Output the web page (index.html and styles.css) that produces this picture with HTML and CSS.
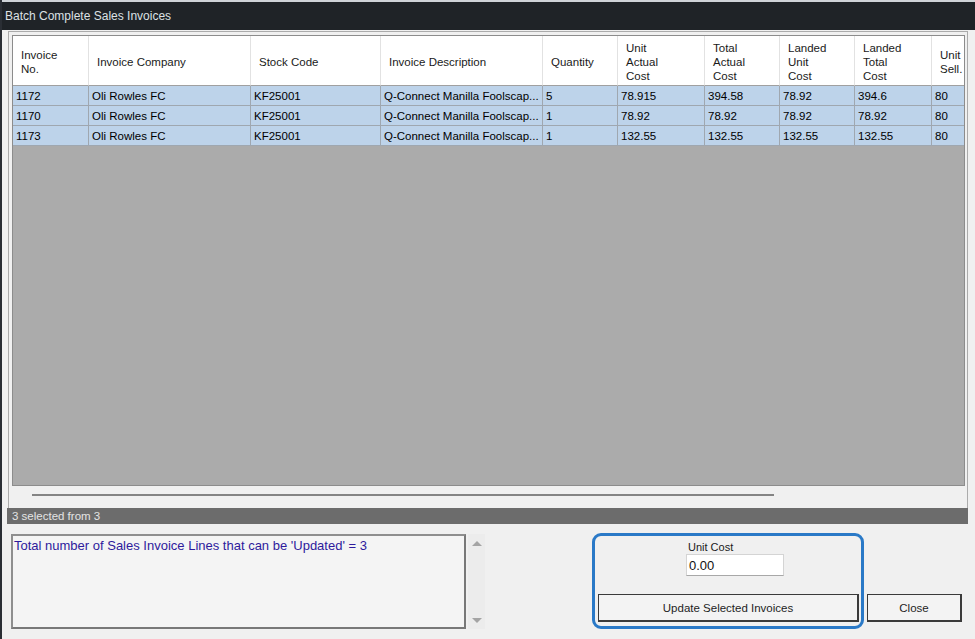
FILE: index.html
```html
<!DOCTYPE html>
<html>
<head>
<meta charset="utf-8">
<link rel="stylesheet" href="styles.css">
</head>
<body>
<div class="window">
  <div class="topstrip"></div>
  <div class="titlebar">Batch Complete Sales Invoices</div>
  <div class="content">
    <div class="gridpanel">
      <div class="grid">
        <div class="table">
          <div class="hcell">Invoice<br>No.</div>
          <div class="hcell">Invoice Company</div>
          <div class="hcell">Stock Code</div>
          <div class="hcell">Invoice Description</div>
          <div class="hcell">Quantity</div>
          <div class="hcell">Unit<br>Actual<br>Cost</div>
          <div class="hcell">Total<br>Actual<br>Cost</div>
          <div class="hcell">Landed<br>Unit<br>Cost</div>
          <div class="hcell">Landed<br>Total<br>Cost</div>
          <div class="hcell last">Unit<br>Sell.</div>

          <div class="cell">1172</div>
          <div class="cell">Oli Rowles FC</div>
          <div class="cell">KF25001</div>
          <div class="cell">Q-Connect Manilla Foolscap...</div>
          <div class="cell">5</div>
          <div class="cell">78.915</div>
          <div class="cell">394.58</div>
          <div class="cell">78.92</div>
          <div class="cell">394.6</div>
          <div class="cell last">80</div>

          <div class="cell">1170</div>
          <div class="cell">Oli Rowles FC</div>
          <div class="cell">KF25001</div>
          <div class="cell">Q-Connect Manilla Foolscap...</div>
          <div class="cell">1</div>
          <div class="cell">78.92</div>
          <div class="cell">78.92</div>
          <div class="cell">78.92</div>
          <div class="cell">78.92</div>
          <div class="cell last">80</div>

          <div class="cell">1173</div>
          <div class="cell">Oli Rowles FC</div>
          <div class="cell">KF25001</div>
          <div class="cell">Q-Connect Manilla Foolscap...</div>
          <div class="cell">1</div>
          <div class="cell">132.55</div>
          <div class="cell">132.55</div>
          <div class="cell">132.55</div>
          <div class="cell">132.55</div>
          <div class="cell last">80</div>
        </div>
      </div>
      <div class="hscroll"><div class="hthumb"></div></div>
    </div>
    <div class="status">3 selected from 3</div>
    <div class="bottom">
      <div class="msgbox">Total number of Sales Invoice Lines that can be 'Updated' = 3</div>
      <div class="vscroll">
        <div class="arrow up"></div>
        <div class="arrow down"></div>
      </div>
      <div class="group">
        <div class="grouplabel">Unit Cost</div>
        <div class="costinput">0.00</div>
        <div class="btn update">Update Selected Invoices</div>
      </div>
      <div class="btn close">Close</div>
    </div>
  </div>
</div>
</body>
</html>
```

FILE: styles.css
```css
* { box-sizing: border-box; }
html, body {
  margin: 0;
  padding: 0;
  width: 975px;
  height: 639px;
  overflow: hidden;
  background: #f0f0f0;
  font-family: "Liberation Sans", Arial, sans-serif;
  color: #111;
}
.window {
  width: 975px;
  height: 639px;
  border-left: 2px solid #2a2e34;
  background: #f0f0f0;
  display: flex;
  flex-direction: column;
}
.topstrip {
  height: 2px;
  background: #cfd3d7;
}
.titlebar {
  height: 28px;
  background: #1f2327;
  color: #dde1e4;
  font-size: 12px;
  padding-left: 3px;
  display: flex;
  align-items: center;
}
.content {
  padding-top: 1px;
}
.gridpanel {
  margin-left: 6px;
  width: 960px;
  height: 477px;
  border: 1px solid #ababab;
  border-bottom: none;
  padding: 3px 0 0 3px;
  background: #f0f0f0;
}
.grid {
  width: 953px;
  height: 451px;
  border: 1px solid #8c8c8c;
  background: #ababab;
  overflow: hidden;
}
.table {
  display: grid;
  grid-template-columns: 76px 162px 130px 162px 75px 87px 75px 75px 77px 32px;
  grid-template-rows: 50px 20px 20px 20px;
  font-size: 11.5px;
}
.hcell {
  background: #ffffff;
  border-right: 1px solid #e2e2e2;
  border-bottom: 1px solid #a0a0a0;
  padding: 2px 0 0 8px;
  line-height: 14px;
  color: #1a1a1a;
  display: flex;
  align-items: center;
  overflow: hidden;
  white-space: nowrap;
}
.cell {
  background: #bdd3ea;
  border-right: 1px solid #9fa7b0;
  border-bottom: 1px solid #9fa7b0;
  padding: 1px 0 0 3px;
  display: flex;
  align-items: center;
  white-space: nowrap;
  overflow: hidden;
  color: #000;
}
.hcell.last, .cell.last { border-right: none; }
.hscroll {
  height: 22px;
  padding-top: 8px;
  padding-left: 20px;
}
.hthumb {
  width: 742px;
  height: 2px;
  background: #848484;
}
.status {
  margin-left: 5px;
  width: 961px;
  height: 16px;
  background: #6c6c6c;
  color: #e4e4e4;
  font-size: 11.5px;
  padding-left: 5px;
  display: flex;
  align-items: center;
}
.bottom {
  margin-top: 9px;
  display: flex;
  align-items: flex-start;
  height: 96px;
}
.msgbox {
  margin-top: 1px;
  margin-left: 9px;
  width: 455px;
  height: 95px;
  background: #f4f4f4;
  border: 2px solid #8e8e8e;
  border-right-color: #787878;
  border-bottom-color: #787878;
  color: #2e1a9c;
  font-size: 13px;
  padding: 2px 0 0 1px;
  line-height: 16px;
}
.vscroll {
  margin-top: 1px;
  margin-left: 2px;
  width: 17px;
  height: 95px;
  background: #ececec;
  display: flex;
  flex-direction: column;
  justify-content: space-between;
  align-items: center;
  padding: 7px 0 6px;
}
.arrow {
  width: 0;
  height: 0;
  border-left: 5px solid transparent;
  border-right: 5px solid transparent;
}
.arrow.up { border-bottom: 5px solid #a4a4a4; }
.arrow.down { border-top: 5px solid #a4a4a4; }
.group {
  margin-left: 107px;
  width: 272px;
  height: 96px;
  border: 3px solid #2a79c7;
  border-radius: 9px;
  padding: 5px 2px 0 3px;
  display: flex;
  flex-direction: column;
  align-items: flex-start;
}
.grouplabel {
  margin-left: 90px;
  font-size: 11px;
  line-height: 13px;
  color: #1a1a1a;
}
.costinput {
  margin-left: 88px;
  width: 98px;
  height: 22px;
  background: #ffffff;
  border: 1px solid #d4d4d4;
  border-bottom-color: #a8a8a8;
  font-size: 13px;
  padding: 3px 0 0 2px;
  color: #111;
}
.btn {
  height: 28px;
  border: 1px solid #3a3a3a;
  border-right-width: 2px;
  border-bottom-width: 2px;
  background: #f3f3f3;
  font-size: 11.5px;
  color: #1e1e1e;
  display: flex;
  align-items: center;
  justify-content: center;
}
.btn.update {
  margin-top: 18px;
  width: 261px;
}
.btn.close {
  margin-top: 61px;
  margin-left: 3px;
  width: 95px;
}
```
